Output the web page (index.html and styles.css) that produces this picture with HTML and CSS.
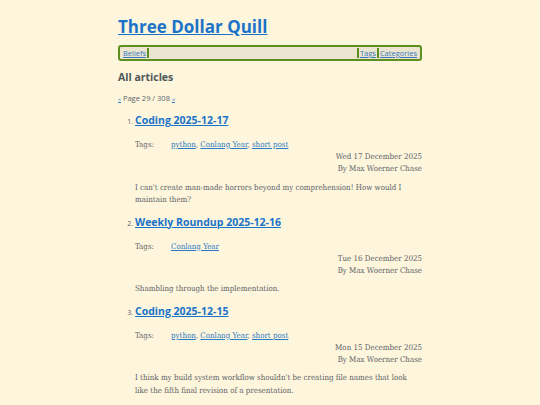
FILE: index.html
```html
<!DOCTYPE html>
<html lang="en">
<head>
<meta charset="utf-8">
<title>Three Dollar Quill</title>
<link rel="stylesheet" href="styles.css">
</head>
<body>
<div class="page">
  <header class="site-header">
    <h1 class="site-title"><a href="#">Three Dollar Quill</a></h1>
    <nav class="site-nav">
      <a href="#" class="nav-item">Beliefs</a>
      <span class="nav-fill"></span>
      <a href="#" class="nav-item nav-tags">Tags</a>
      <a href="#" class="nav-item nav-cats">Categories</a>
    </nav>
  </header>
  <main>
    <h2 class="page-heading">All articles</h2>
    <p class="pager"><a href="#">«</a> Page 29 / 308 <a href="#">»</a></p>
    <ol class="articles" start="1">
      <li class="article">
        <h3 class="article-title"><a href="#">Coding 2025-12-17</a></h3>
        <div class="tags"><span class="tags-label">Tags:</span><span class="tags-list"><a href="#">python</a>, <a href="#">Conlang Year</a>, <a href="#">short post</a></span></div>
        <div class="meta"><div>Wed 17 December 2025</div><div>By Max Woerner Chase</div></div>
        <p class="summary">I can't create man-made horrors beyond my comprehension! How would I maintain them?</p>
      </li>
      <li class="article">
        <h3 class="article-title"><a href="#">Weekly Roundup 2025-12-16</a></h3>
        <div class="tags"><span class="tags-label">Tags:</span><span class="tags-list"><a href="#">Conlang Year</a></span></div>
        <div class="meta"><div>Tue 16 December 2025</div><div>By Max Woerner Chase</div></div>
        <p class="summary">Shambling through the implementation.</p>
      </li>
      <li class="article">
        <h3 class="article-title"><a href="#">Coding 2025-12-15</a></h3>
        <div class="tags"><span class="tags-label">Tags:</span><span class="tags-list"><a href="#">python</a>, <a href="#">Conlang Year</a>, <a href="#">short post</a></span></div>
        <div class="meta"><div>Mon 15 December 2025</div><div>By Max Woerner Chase</div></div>
        <p class="summary">I think my build system workflow shouldn't be creating file names that look like the fifth final revision of a presentation.</p>
      </li>
    </ol>
  </main>
</div>
</body>
</html>
```
FILE: styles.css
```css
html, body {
  margin: 0;
  padding: 0;
  background: #fdf5dc;
}
body {
  font-family: "DejaVu Serif Condensed", "DejaVu Serif", serif;
  font-stretch: condensed;
  color: #5e6467;
}
a { color: #2a7ac4; }
.page {
  width: 304px;
  margin: 0 auto;
  padding-top: 15px;
}
.site-title {
  font-family: "Open Sans", sans-serif;
  font-stretch: normal;
  font-size: 17px;
  font-weight: 700;
  line-height: 24px;
  margin: 0;
}
.site-title a { color: #1a73c8; }
.site-nav {
  margin-top: 6px;
  display: flex;
  align-items: center;
  height: 12px;
  padding: 0 2px;
  border: 2px solid #5c8f1f;
  border-radius: 3px;
  background: #ebe4cf;
  font-family: "Open Sans", sans-serif;
  font-stretch: normal;
  font-size: 7.5px;
}
.nav-item {
  color: #3a7bbf;
  padding: 0 1px;
  line-height: 10px;
}
.nav-fill {
  flex: 1;
  align-self: stretch;
  margin: 1px 0;
  border-left: 2px solid #5c8f1f;
  border-right: 2px solid #5c8f1f;
}
.nav-cats { border-left: 2px solid #5c8f1f; }
.page-heading {
  font-family: "Open Sans", sans-serif;
  font-stretch: normal;
  font-size: 10.5px;
  font-weight: 700;
  color: #4f5759;
  margin: 7px 0 0;
  line-height: 18px;
}
.pager {
  font-family: "Open Sans", sans-serif;
  font-stretch: normal;
  font-size: 7.5px;
  margin: 7px 0 0;
  line-height: 10px;
}
.pager a { font-size: 6px; }
.articles {
  margin: 0;
  padding: 1px 0 0 17px;
}
.article {
  font-family: "Open Sans", sans-serif;
  font-stretch: normal;
  font-size: 7px;
  color: #5e6467;
}
.article-title {
  font-family: "Open Sans", sans-serif;
  font-stretch: normal;
  font-size: 10.5px;
  font-weight: 700;
  line-height: 18px;
  margin: 6px 0 0;
}
.article-title a { color: #1a73c8; }
.tags, .meta, .summary {
  font-family: "DejaVu Serif Condensed", "DejaVu Serif", serif;
  font-stretch: condensed;
  font-size: 7.9px;
}
.tags {
  margin-top: 10px;
  display: flex;
  line-height: 12px;
}
.tags-label { width: 36px; }
.meta {
  text-align: right;
  line-height: 12px;
}
.summary {
  margin: 6.5px 0 0;
  line-height: 12.5px;
}
```
